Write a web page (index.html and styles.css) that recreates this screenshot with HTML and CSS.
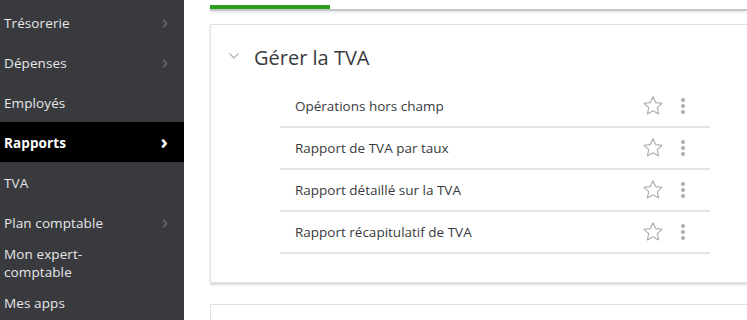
FILE: index.html
```html
<!DOCTYPE html>
<html lang="fr">
<head>
<meta charset="utf-8">
<link rel="stylesheet" href="styles.css">
</head>
<body>
<div class="app">
  <nav class="sidebar">
    <div class="nav-item"><span>Trésorerie</span><span class="chev">&#8250;</span></div>
    <div class="nav-item"><span>Dépenses</span><span class="chev">&#8250;</span></div>
    <div class="nav-item"><span>Employés</span></div>
    <div class="nav-item active"><span>Rapports</span><span class="chev">&#8250;</span></div>
    <div class="nav-item"><span>TVA</span></div>
    <div class="nav-item"><span>Plan comptable</span><span class="chev">&#8250;</span></div>
    <div class="nav-item two"><span>Mon expert-<br>comptable</span></div>
    <div class="nav-item"><span>Mes apps</span></div>
  </nav>
  <main class="main">
    <div class="tabs"><div class="tab-active"></div></div>
    <section class="card">
      <h2 class="card-title">
        <svg class="caret" width="12" height="8" viewBox="0 0 12 8"><path d="M1.5 1.5 L6 6 L10.5 1.5" fill="none" stroke="#b4b6ba" stroke-width="1.4"/></svg>
        Gérer la TVA
      </h2>
      <ul class="reports">
        <li class="report"><span class="label">Opérations hors champ</span><span class="actions"><svg class="star" width="22" height="22" viewBox="0 0 22 22"><path d="M11 1.8 L13.7 7.6 L20 8.3 L15.3 12.6 L16.6 18.9 L11 15.7 L5.4 18.9 L6.7 12.6 L2 8.3 L8.3 7.6 Z" fill="none" stroke="#a9abaf" stroke-width="1.1" stroke-linejoin="round"/></svg><span class="dots"><i></i><i></i><i></i></span></span></li>
        <li class="report"><span class="label">Rapport de TVA par taux</span><span class="actions"><svg class="star" width="22" height="22" viewBox="0 0 22 22"><path d="M11 1.8 L13.7 7.6 L20 8.3 L15.3 12.6 L16.6 18.9 L11 15.7 L5.4 18.9 L6.7 12.6 L2 8.3 L8.3 7.6 Z" fill="none" stroke="#a9abaf" stroke-width="1.1" stroke-linejoin="round"/></svg><span class="dots"><i></i><i></i><i></i></span></span></li>
        <li class="report"><span class="label">Rapport détaillé sur la TVA</span><span class="actions"><svg class="star" width="22" height="22" viewBox="0 0 22 22"><path d="M11 1.8 L13.7 7.6 L20 8.3 L15.3 12.6 L16.6 18.9 L11 15.7 L5.4 18.9 L6.7 12.6 L2 8.3 L8.3 7.6 Z" fill="none" stroke="#a9abaf" stroke-width="1.1" stroke-linejoin="round"/></svg><span class="dots"><i></i><i></i><i></i></span></span></li>
        <li class="report"><span class="label">Rapport récapitulatif de TVA</span><span class="actions"><svg class="star" width="22" height="22" viewBox="0 0 22 22"><path d="M11 1.8 L13.7 7.6 L20 8.3 L15.3 12.6 L16.6 18.9 L11 15.7 L5.4 18.9 L6.7 12.6 L2 8.3 L8.3 7.6 Z" fill="none" stroke="#a9abaf" stroke-width="1.1" stroke-linejoin="round"/></svg><span class="dots"><i></i><i></i><i></i></span></span></li>
      </ul>
    </section>
    <section class="card next"></section>
  </main>
</div>
</body>
</html>
```
FILE: styles.css
```css
html, body {
  margin: 0;
  padding: 0;
  height: 100%;
  overflow: hidden;
  background: #fff;
  font-family: "Open Sans", "Liberation Sans", sans-serif;
}
.app {
  display: flex;
  height: 320px;
  overflow: hidden;
}
.sidebar {
  width: 184px;
  flex: none;
  background: #393a3d;
  color: #e6e7e8;
  padding-top: 2px;
  box-sizing: border-box;
}
.nav-item {
  height: 40px;
  display: flex;
  align-items: center;
  justify-content: space-between;
  padding: 2px 16px 0 4px;
  box-sizing: border-box;
  font-size: 13.5px;
  letter-spacing: 0.1px;
}
.nav-item.two {
  line-height: 18px;
}
.nav-item.active {
  background: #000;
  color: #fff;
  font-weight: 700;
}
.chev {
  font-size: 20px;
  color: #6c6d71;
  line-height: 1;
  margin-top: -3px;
}
.active .chev {
  color: #fff;
  font-weight: 700;
}
.main {
  flex: 1;
  padding-left: 26px;
  min-width: 0;
}
.tabs {
  margin-top: 5px;
  height: 4px;
  border-bottom: 2px solid #c3c6cb;
  box-shadow: 0 2px 2px #eceef0;
}
.tab-active {
  width: 120px;
  height: 4px;
  background: #2ca01c;
}
.card {
  margin-top: 13px;
  border: 1px solid #dfe0e2;
  border-right: none;
  box-shadow: 0 2px 2px #d8d9dc;
  height: 259px;
  box-sizing: border-box;
  padding: 0;
}
.card.next {
  margin-top: 21px;
  height: 40px;
  box-shadow: none;
}
.card-title {
  margin: 0;
  padding: 12px 0 0 17px;
  height: 40px;
  display: flex;
  align-items: center;
  font-size: 20px;
  font-weight: 400;
  color: #393a3d;
  box-sizing: content-box;
}
.caret {
  margin-right: 14px;
  margin-top: -2px;
}
.reports {
  list-style: none;
  margin: 9px 0 0 69px;
  padding: 0;
  width: 430px;
}
.report {
  height: 40px;
  border-bottom: 2px solid #e3e4e6;
  display: flex;
  align-items: center;
  justify-content: space-between;
  padding-left: 15px;
  font-size: 13.5px;
  color: #393a3d;
}
.actions {
  display: flex;
  align-items: center;
  gap: 17px;
  padding-right: 25px;
}
.dots {
  display: flex;
  flex-direction: column;
  gap: 2px;
}
.dots i {
  width: 4px;
  height: 4px;
  border-radius: 50%;
  background: #a9abaf;
}
```
